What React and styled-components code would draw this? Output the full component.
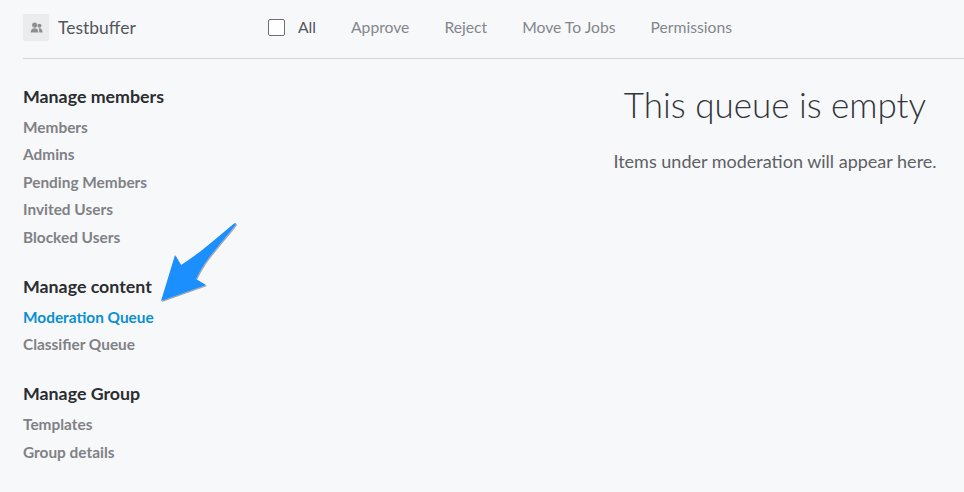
import React from "react";
import styled, { createGlobalStyle } from "styled-components";

const GlobalStyle = createGlobalStyle`
  html, body {
    margin: 0;
    padding: 0;
    background: #f7f8fa;
    font-family: "Lato", "Noto Sans", sans-serif;
    overflow: hidden;
  }
`;

const Page = styled.div`
  position: relative;
  width: 964px;
  height: 492px;
  padding-left: 23px;
  box-sizing: border-box;
`;

const Header = styled.header`
  display: flex;
  align-items: center;
  height: 54px;
  padding-bottom: 4px;
  border-bottom: 1px solid #d2d4d8;
  box-sizing: content-box;
`;

const Brand = styled.div`
  display: flex;
  align-items: center;
  gap: 9px;
  width: 245px;
  font-size: 17.5px;
  color: #53565c;
`;

const Avatar = styled.div`
  display: flex;
  align-items: center;
  justify-content: center;
  width: 26px;
  height: 26px;
  border-radius: 2px;
  background: #ebecee;
  box-shadow: 0 1px 1px rgba(0, 0, 0, 0.06);
`;

const Toolbar = styled.div`
  display: flex;
  align-items: center;
  gap: 35px;
`;

const AllLabel = styled.label`
  display: flex;
  align-items: center;
  gap: 13px;
  font-size: 15.7px;
  color: #53565c;
`;

const Check = styled.span`
  width: 15px;
  height: 15px;
  border: 1px solid #6b6e74;
  border-radius: 2px;
  background: #fff;
`;

const Action = styled.span`
  font-size: 15.7px;
  color: #83868c;
`;

const Body = styled.div`
  display: flex;
`;

const Sidebar = styled.nav`
  flex: none;
  width: 590px;
  padding-top: 23.5px;
`;

const Group = styled.section`
  margin-bottom: 21.5px;
`;

const GroupTitle = styled.h3`
  margin: 0 0 4px;
  font-size: 17.8px;
  line-height: 27px;
  font-weight: 700;
  color: #2b2d31;
`;

const Item = styled.a`
  display: block;
  font-size: 15.4px;
  line-height: 27.5px;
  font-weight: 700;
  color: ${(p) => (p.$active ? "#0a8fd0" : "#7f8186")};
`;

const Main = styled.main`
  flex: none;
  width: 324px;
  padding-top: 23px;
  text-align: center;
  white-space: nowrap;
`;

const Title = styled.h1`
  margin: 0 0 23px;
  font-size: 35px;
  line-height: 44px;
  font-weight: 300;
  color: #33353a;
`;

const Sub = styled.p`
  margin: 0;
  font-size: 18px;
  line-height: 24px;
  color: #5d6066;
`;

const Arrow = styled.svg`
  position: absolute;
  left: 150px;
  top: 215px;
  overflow: visible;
`;

const groups = [
  { title: "Manage members", items: ["Members", "Admins", "Pending Members", "Invited Users", "Blocked Users"] },
  { title: "Manage content", items: ["Moderation Queue", "Classifier Queue"] },
  { title: "Manage Group", items: ["Templates", "Group details"] },
];

export default function App() {
  return (
    <>
      <GlobalStyle />
      <Page>
        <Header>
          <Brand>
            <Avatar>
              <svg width="13" height="11" viewBox="0 0 14 12" fill="#8d8f93">
                <circle cx="5" cy="3.4" r="2.8" />
                <circle cx="10.200" cy="4" r="2.2" />
                <path d="M.6 11.500c0-3.200 1.700-4.700 4.400-4.700s4 1.500 4 4.700z" />
                <path d="M9.400 7c2.400-.6 4.200.9 4.200 4.500H10c0-1.900-.2-3.300-.6-4.500z" />
              </svg>
            </Avatar>
            Testbuffer
          </Brand>
          <Toolbar>
            <AllLabel>
              <Check />
              All
            </AllLabel>
            <Action>Approve</Action>
            <Action>Reject</Action>
            <Action>Move To Jobs</Action>
            <Action>Permissions</Action>
          </Toolbar>
        </Header>
        <Body>
          <Sidebar>
            {groups.map((g) => (
              <Group key={g.title}>
                <GroupTitle>{g.title}</GroupTitle>
                {g.items.map((i) => (
                  <Item key={i} $active={i === "Moderation Queue"}>
                    {i}
                  </Item>
                ))}
              </Group>
            ))}
          </Sidebar>
          <Main>
            <Title>This queue is empty</Title>
            <Sub>Items under moderation will appear here.</Sub>
          </Main>
        </Body>
        <Arrow width="90" height="90" viewBox="0 0 90 90">
          <defs>
            <filter id="arrow-shadow" x="-20%" y="-20%" width="140%" height="140%">
              <feDropShadow dx="1" dy="1" stdDeviation="0.7" floodColor="#000" floodOpacity="0.35" />
            </filter>
          </defs>
          <path
            d="M84 8.500 C 86 7, 86.500 9, 85 10.500 C 70 30, 55 44, 46 64 L 56 70 L 11 86 L 25 40 L 31 50 C 50 38, 68 22, 84 8.500 Z"
            fill="#1d8fff"
            filter="url(#arrow-shadow)"
          />
        </Arrow>
      </Page>
    </>
  );
}
